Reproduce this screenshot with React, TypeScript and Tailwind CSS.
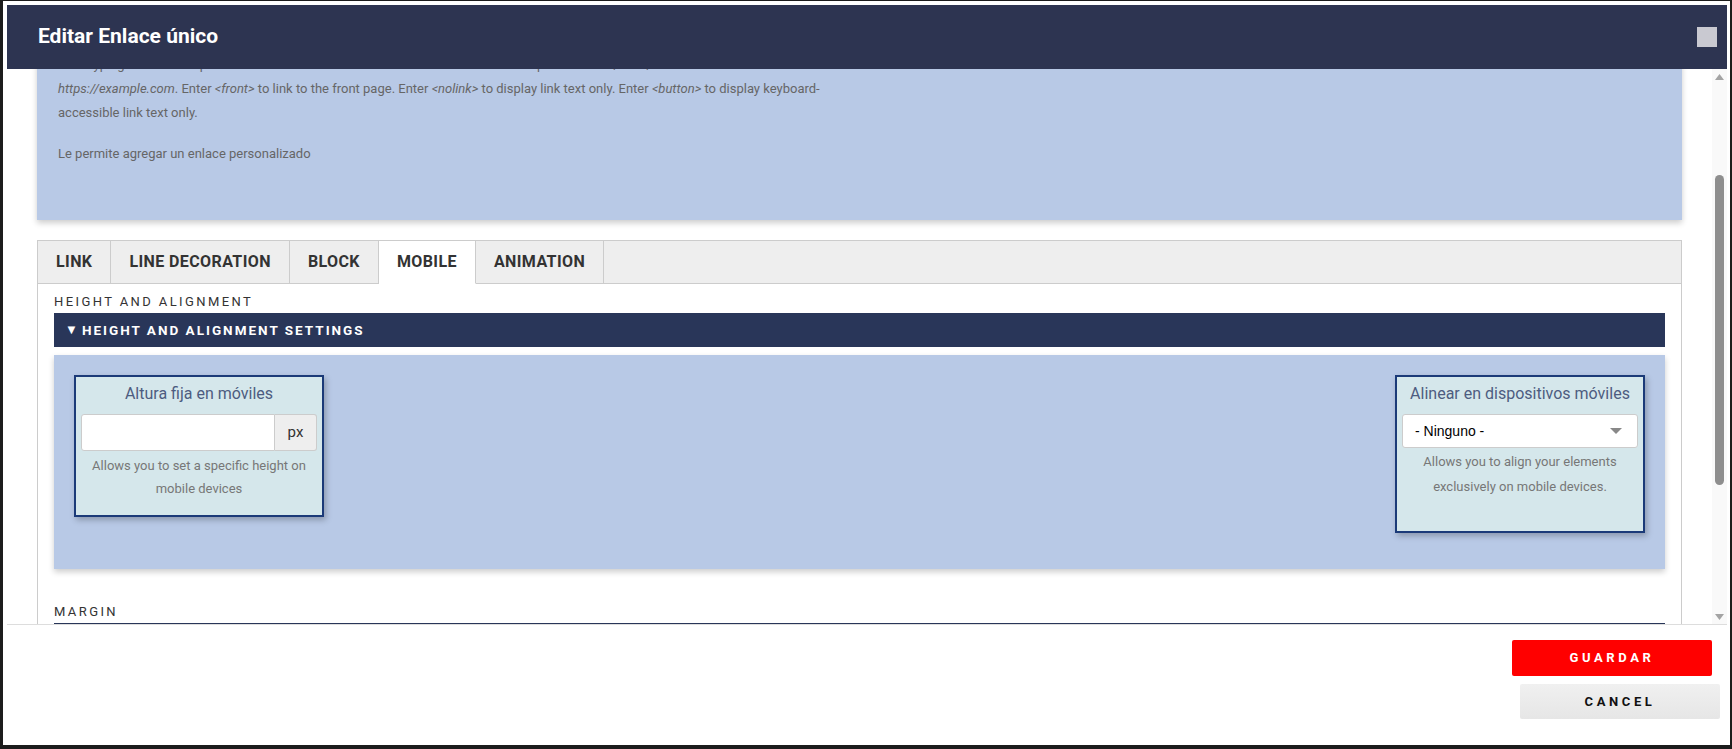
import React from 'react';

const tabs = ['LINK', 'LINE DECORATION', 'BLOCK', 'MOBILE', 'ANIMATION'];

function Scrollbar() {
  return (
    <div className="w-[15px] flex flex-col items-center bg-[#f9f9f9]">
      <div className="h-[15px] flex items-center justify-center">
        <svg width="9" height="6" viewBox="0 0 9 6">
          <path d="M0 6 L4.5 0 L9 6 Z" fill="#a3a3a3" />
        </svg>
      </div>
      <div className="flex-1 w-full flex justify-center">
        <div className="mt-[91px] w-[9px] h-[310px] rounded-full bg-[#8e8e8e]" />
      </div>
      <div className="h-[15px] flex items-center justify-center">
        <svg width="9" height="6" viewBox="0 0 9 6">
          <path d="M0 0 L9 0 L4.5 6 Z" fill="#a3a3a3" />
        </svg>
      </div>
    </div>
  );
}

function SectionTitle({ label }: { label: string }) {
  return (
    <>
      <div className="text-[13px] leading-[18px] tracking-[2.4px] text-[#333333] mb-[2px]">{label}</div>
      <div className="h-[34px] bg-[#293659] flex items-center pl-[11px] text-white text-[13.5px] font-bold tracking-[2px]">
        <span className="text-[13px] mr-[4px] tracking-normal">▼</span>
        {label} SETTINGS
      </div>
    </>
  );
}

export default function App() {
  return (
    <div className="h-[749px] w-full bg-[#1c1c1c] pl-[3px] pr-[2px] pt-px pb-[4px] font-['Roboto',sans-serif]">
      <div className="h-full bg-white pl-1 pr-[3px] py-1 flex flex-col">
        {/* header */}
        <div className="h-[64px] shrink-0 bg-[#2d3451] flex items-center justify-between pl-[31px] pr-[10px]">
          <h1 className="text-[21px] font-bold text-white">Editar Enlace único</h1>
          <div className="w-5 h-5 bg-[#c9c9d1]" />
        </div>

        {/* body */}
        <div className="h-[555px] shrink-0 flex">
          <div className="flex-1 overflow-hidden">
            <div className="-mt-[114px]">
              <div className="mx-[30px] bg-[#b8c9e6] shadow-[0_3px_6px_rgba(0,0,0,0.2)] pt-5 px-[21px] pb-[54px]">
                <label className="block text-[14px] leading-6 font-bold text-[#333] mb-1">URL</label>
                <div className="h-[38px] w-[600px] bg-white border border-[#cccccc] rounded-[3px] mb-3" />
                <p className="text-[13px] leading-6 text-[#666666] whitespace-nowrap">
                  Start typing the title of a piece of content to select it. You can also enter an internal path such as <em>/node/add</em> or an external URL such as
                  <br />
                  <em>https://example.com</em>. Enter <em>&lt;front&gt;</em> to link to the front page. Enter <em>&lt;nolink&gt;</em> to display link text only. Enter <em>&lt;button&gt;</em> to display keyboard-
                  <br />
                  accessible link text only.
                </p>
                <p className="mt-[17px] text-[13px] leading-6 text-[#666666]">Le permite agregar un enlace personalizado</p>
              </div>

              <div className="mx-[30px] mt-5 border border-[#cccccc]">
                <div className="flex bg-[#eeeeee]">
                  {tabs.map((t) => (
                    <div
                      key={t}
                      className={
                        t === 'MOBILE'
                          ? 'h-[43px] px-[18px] flex items-center border-r border-b border-[#cccccc] border-b-white bg-white text-[16px] tracking-[0.4px] font-bold text-[#333333]'
                          : 'h-[43px] px-[18px] flex items-center border-r border-b border-[#cccccc] text-[16px] tracking-[0.4px] font-bold text-[#333333]'
                      }
                    >
                      {t}
                    </div>
                  ))}
                  <div className="flex-1 border-b border-[#cccccc]" />
                </div>

                <div className="px-4 pt-[9px] pb-8">
                  <SectionTitle label="HEIGHT AND ALIGNMENT" />
                  <div className="mt-2 bg-[#b8c9e6] shadow-[0_3px_6px_rgba(0,0,0,0.2)] p-5 flex justify-between items-start">
                    <div className="w-[250px] mb-4 border-2 border-[#1b3a78] bg-[#d5e7eb] px-[5px] pt-[5px] pb-[15px] shadow-[2px_3px_6px_rgba(0,0,0,0.25)]">
                      <div className="text-center text-[16px] leading-6 text-[#4d5c80]">Altura fija en móviles</div>
                      <div className="mt-2 flex h-[37px]">
                        <input className="flex-1 min-w-0 bg-white border border-[#cccccc] rounded-l-[3px] outline-none" />
                        <span className="w-[42px] flex items-center justify-center bg-[#eeeeee] border border-l-0 border-[#cccccc] rounded-r-[3px] text-[15px] text-[#333333]">
                          px
                        </span>
                      </div>
                      <p className="mt-[3px] text-center text-[13px] leading-[23px] text-[#777777] whitespace-nowrap">
                        Allows you to set a specific height on
                        <br />
                        mobile devices
                      </p>
                    </div>

                    <div className="w-[250px] mb-4 border-2 border-[#1b3a78] bg-[#d5e7eb] px-[5px] pt-[5px] pb-[32px] shadow-[2px_3px_6px_rgba(0,0,0,0.25)]">
                      <div className="text-center text-[16px] leading-6 text-[#4d5c80]">Alinear en dispositivos móviles</div>
                      <div className="mt-2 h-[34px] flex items-center justify-between border border-[#cccccc] rounded-[3px] bg-white pl-[12px] pr-[15px]">
                        <span className="font-['Liberation_Sans',Arial,sans-serif] text-[14px] text-black">- Ninguno -</span>
                        <svg width="12" height="6" viewBox="0 0 12 6">
                          <path d="M0 0 L12 0 L6 6 Z" fill="#888888" />
                        </svg>
                      </div>
                      <p className="mt-px text-center text-[13px] leading-[25px] text-[#777777] whitespace-nowrap">
                        Allows you to align your elements
                        <br />
                        exclusively on mobile devices.
                      </p>
                    </div>
                  </div>

                  <div className="mt-[34px]">
                    <SectionTitle label="MARGIN" />
                    <div className="mt-2 h-[180px] bg-[#b8c9e6]" />
                  </div>
                </div>
              </div>
            </div>
          </div>
          <Scrollbar />
        </div>

        {/* footer */}
        <div className="flex-1 border-t border-[#dddddd] flex flex-col items-end pt-[15px] gap-2">
          <button className="w-[200px] h-[36px] mr-[15px] rounded-[2px] bg-[#ff0000] text-white text-[13px] font-bold tracking-[3.6px]">
            GUARDAR
          </button>
          <button className="w-[200px] h-[35px] mr-[7px] rounded-[2px] bg-gradient-to-b from-[#f0f0f0] to-[#e6e6e6] text-[#111111] text-[13px] font-bold tracking-[3.6px]">
            CANCEL
          </button>
        </div>
      </div>
    </div>
  );
}
